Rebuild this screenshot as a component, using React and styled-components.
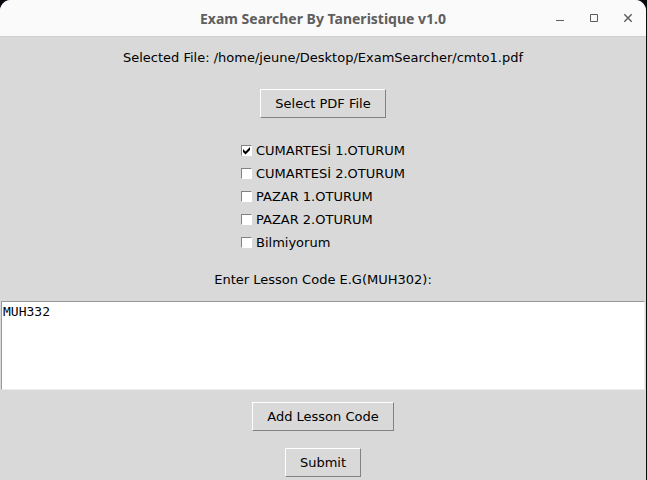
import React, { useState } from "react";
import styled, { createGlobalStyle } from "styled-components";

const GlobalStyle = createGlobalStyle`
  * { box-sizing: border-box; }
  body { margin: 0; background: #08090d; }
`;

const Window = styled.div`
  display: flex;
  flex-direction: column;
  min-height: 100vh;
  margin-right: 1px;
  border-radius: 11px 11px 0 0;
  background: #d9d9d9;
  color: #000;
  font: 13px/17px "DejaVu Sans", sans-serif;
`;

const TitleBar = styled.header`
  display: grid;
  grid-template-columns: 1fr auto 1fr;
  align-items: center;
  height: 37px;
  border-bottom: 1px solid #cfcfcf;
  border-radius: 11px 11px 0 0;
  background: #fafafa;
`;

const Title = styled.h1`
  grid-column: 2;
  margin: 0;
  padding-top: 2px;
  color: #5e5e5e;
  font: 700 14px/20px "Noto Sans", sans-serif;
`;

const WindowControls = styled.div`
  display: flex;
  justify-content: flex-end;
  gap: 10px;
  padding-right: 6px;
`;

const ControlButton = styled.button`
  display: grid;
  place-items: center;
  width: 24px;
  height: 24px;
  padding: 0;
  border: 0;
  background: transparent;
`;

const ControlIcon = styled.svg`
  width: 10px;
  height: 10px;
  fill: none;
  stroke: #5c5c5c;
`;

const Content = styled.main`
  display: flex;
  flex-direction: column;
  align-items: center;
  padding: 12px 1px 3px;
`;

const FileLine = styled.p`
  margin: 0 0 23px;
`;

const Button = styled.button`
  height: 29px;
  padding: 0 14px;
  border: 1px solid;
  border-color: #fff #828282 #828282 #fff;
  background: #d9d9d9;
  color: #000;
  font: inherit;
`;

const Options = styled.fieldset`
  display: grid;
  margin: 21px 0 17px;
  padding: 0;
  border: 0;
`;

const Option = styled.label`
  display: flex;
  align-items: center;
  gap: 4px;
  height: 23px;
`;

const CheckboxFrame = styled.span`
  display: grid;
  width: 11px;
  height: 11px;
  > * { grid-area: 1 / 1; }
`;

const Checkbox = styled.input`
  appearance: none;
  width: 11px;
  height: 11px;
  margin: 0;
  border: 1px solid;
  border-color: #828282 #fff #fff #828282;
  background: #fff;
  &:checked + svg { visibility: visible; }
`;

const CheckMark = styled.svg`
  z-index: 1;
  width: 11px;
  height: 11px;
  visibility: hidden;
  pointer-events: none;
`;

const CodeLabel = styled.label`
  margin-bottom: 13px;
`;

const CodeInput = styled.textarea`
  display: block;
  width: 100%;
  height: 89px;
  margin-bottom: 12px;
  padding: 1px;
  border: 1px solid;
  border-color: #999 #ececec #ececec #999;
  border-radius: 0;
  outline: 0;
  resize: none;
  background: #fff;
  color: #000;
  font: 13px/17px "DejaVu Sans Mono", monospace;
`;

const Actions = styled.div`
  display: flex;
  flex-direction: column;
  align-items: center;
  gap: 17px;
`;

const sessions = [
  "CUMARTESİ 1.OTURUM",
  "CUMARTESİ 2.OTURUM",
  "PAZAR 1.OTURUM",
  "PAZAR 2.OTURUM",
  "Bilmiyorum",
];

const controls = [
  { label: "Minimize", path: "M1 7.5H9" },
  { label: "Maximize", path: "M1.5 1.5H8.5V8.5H1.5Z" },
  { label: "Close", path: "M1.3 1.3L8.7 8.7M8.7 1.3L1.3 8.7", weight: 1.4 },
];

function SessionOption({ name, initial }) {
  const [checked, setChecked] = useState(initial);
  return (
    <Option>
      <CheckboxFrame>
        <Checkbox type="checkbox" checked={checked} onChange={(e) => setChecked(e.target.checked)} />
        <CheckMark viewBox="0 0 11 11" aria-hidden="true">
          <path d="M2 4L4.5 6.5L9 2V5L4.5 9.5L2 7Z" fill="#000" />
        </CheckMark>
      </CheckboxFrame>
      {name}
    </Option>
  );
}

export default function App() {
  return (
    <>
      <GlobalStyle />
      <Window>
        <TitleBar>
          <Title>Exam Searcher By Taneristique v1.0</Title>
          <WindowControls>
            {controls.map(({ label, path, weight = 1 }) => (
              <ControlButton key={label} type="button" aria-label={label}>
                <ControlIcon viewBox="0 0 10 10"><path d={path} strokeWidth={weight} /></ControlIcon>
              </ControlButton>
            ))}
          </WindowControls>
        </TitleBar>
        <Content>
          <FileLine>Selected File: /home/jeune/Desktop/ExamSearcher/cmto1.pdf</FileLine>
          <Button type="button">Select PDF File</Button>
          <Options aria-label="Session">
            {sessions.map((name, i) => (
              <SessionOption key={name} name={name} initial={i === 0} />
            ))}
          </Options>
          <CodeLabel htmlFor="lesson-code">Enter Lesson Code E.G(MUH302):</CodeLabel>
          <CodeInput id="lesson-code" defaultValue="MUH332" spellCheck={false} />
          <Actions>
            <Button type="button">Add Lesson Code</Button>
            <Button type="submit">Submit</Button>
          </Actions>
        </Content>
      </Window>
    </>
  );
}
